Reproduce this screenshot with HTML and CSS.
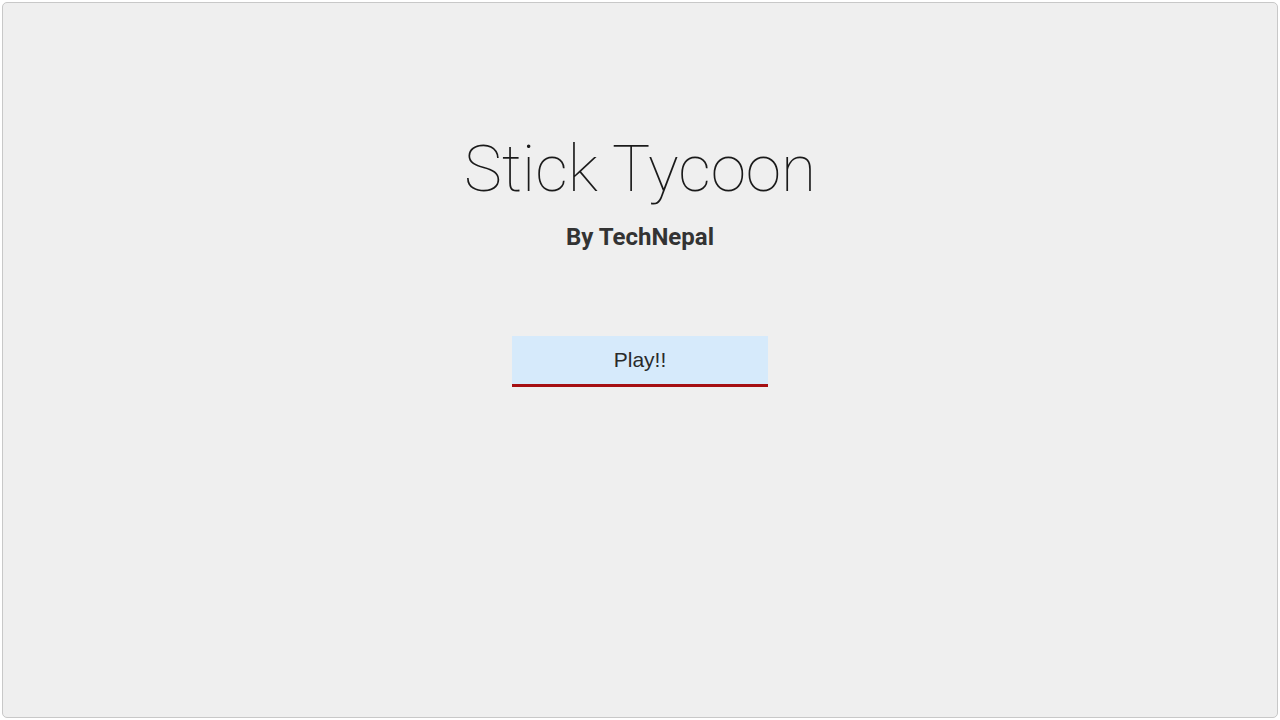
FILE: index.html
```html
<!DOCTYPE html>
<html>
<head>
<meta charset="utf-8">
<link rel="stylesheet" href="styles.css">
</head>
<body>
<div class="frame">
  <h1 class="title">Stick Tycoon</h1>
  <h2 class="byline">By TechNepal</h2>
  <button class="play">Play!!</button>
</div>
</body>
</html>
```
FILE: styles.css
```css
html, body {
  margin: 0;
  padding: 0;
  background: #ffffff;
  width: 1280px;
  height: 720px;
  overflow: hidden;
}
body {
  padding: 2px;
  box-sizing: border-box;
}
.frame {
  box-sizing: border-box;
  width: 1276px;
  height: 716px;
  background: #efefef;
  border: 1px solid #c8c8c8;
  border-radius: 5px;
  display: flex;
  flex-direction: column;
  align-items: center;
  font-family: Roboto, "Liberation Sans", sans-serif;
}
.title {
  margin: 129px 0 0 0;
  font-size: 64px;
  font-weight: 100;
  line-height: 75px;
  color: #1a1a1a;
}
.byline {
  margin: 15px 0 0 0;
  font-size: 24px;
  font-weight: 700;
  line-height: 30px;
  color: #333333;
}
.play {
  margin-top: 84px;
  width: 256px;
  height: 51px;
  background: #d6eafb;
  border: none;
  border-bottom: 3px solid #a50f13;
  font-family: "Liberation Sans", Arial, sans-serif;
  font-size: 21px;
  color: #2a2a2a;
  padding: 0;
  box-sizing: border-box;
}
```
